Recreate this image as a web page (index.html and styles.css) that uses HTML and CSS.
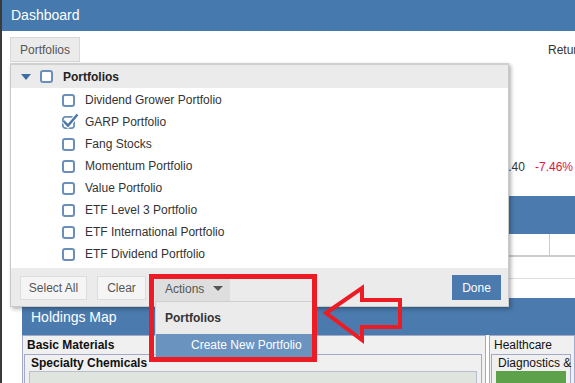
FILE: index.html
```html
<!DOCTYPE html>
<html>
<head>
<meta charset="utf-8">
<title>Dashboard</title>
<link rel="stylesheet" href="styles.css">
</head>
<body>
<div class="app">
  <header class="topbar">Dashboard</header>
  <div class="toolbar">
    <button class="tab">Portfolios</button>
    <span class="returns">Returns</span>
  </div>
  <main class="content">
    <div class="stats"><span class="val">$12,480.40</span><span class="chg">-7.46%</span></div>
    <section class="perf">
      <div class="perf-head"></div>
      <div class="perf-row thead"><span class="cell"></span></div>
      <div class="perf-row"></div>
    </section>
    <section class="hmap">
      <div class="hmap-head">Holdings Map</div>
      <div class="hmap-body">
        <div class="sector wide">
          <div class="sector-title bold">Basic Materials</div>
          <div class="industry">
            <div class="industry-title bold">Specialty Chemicals</div>
            <div class="tiles"></div>
          </div>
        </div>
        <div class="sector">
          <div class="sector-title">Healthcare</div>
          <div class="industry">
            <div class="industry-title">Diagnostics &amp; Research</div>
            <div class="tiles"><div class="tile-green"></div></div>
          </div>
        </div>
      </div>
    </section>
  </main>

  <div class="dropdown">
    <div class="dd-head">
      <span class="caret-down"></span>
      <span class="cb"></span>
      <span class="dd-head-label">Portfolios</span>
    </div>
    <ul class="dd-list">
      <li class="dd-item"><span class="cb"></span>Dividend Grower Portfolio</li>
      <li class="dd-item"><svg class="cb-checked" viewBox="0 0 13 13" width="13" height="13"><rect x="0.9" y="0.9" width="11.2" height="11.2" rx="2.5" fill="#fff" stroke="#6a8fba" stroke-width="1.8"/><path d="M1.5 5 L6 9.6 L15.5 -1.5" fill="none" stroke="#fff" stroke-width="4.5"/><path d="M1.5 5 L6 9.6 L15.5 -1.5" fill="none" stroke="#4a76a8" stroke-width="2.4"/></svg>GARP Portfolio</li>
      <li class="dd-item"><span class="cb"></span>Fang Stocks</li>
      <li class="dd-item"><span class="cb"></span>Momentum Portfolio</li>
      <li class="dd-item"><span class="cb"></span>Value Portfolio</li>
      <li class="dd-item"><span class="cb"></span>ETF Level 3 Portfolio</li>
      <li class="dd-item"><span class="cb"></span>ETF International Portfolio</li>
      <li class="dd-item"><span class="cb"></span>ETF Dividend Portfolio</li>
    </ul>
    <div class="dd-foot">
      <button class="btn btn-select">Select All</button>
      <button class="btn btn-clear">Clear</button>
      <div class="actions">
        <button class="btn btn-actions">Actions<span class="caret-sm"></span></button>
        <div class="actions-menu">
          <div class="menu-title">Portfolios</div>
          <div class="menu-item">Create New Portfolio</div>
        </div>
      </div>
      <button class="btn btn-done">Done</button>
    </div>
  </div>

  <div class="annot-box"></div>
  <svg class="annot-arrow" width="82" height="60" viewBox="0 0 82 60">
    <polygon points="4,29 40,4 40,16 78,16 78,43 40,43 40,56" fill="none" stroke="#ed1c24" stroke-width="4" stroke-linejoin="miter"/>
  </svg>
</div>
</body>
</html>
```

FILE: styles.css
```css
* { box-sizing: border-box; margin: 0; padding: 0; }
html, body { width: 575px; height: 383px; overflow: hidden; }
body {
  background: #3a3a3a;
  font-family: "Liberation Sans", Arial, sans-serif;
  font-size: 12px;
  color: #333;
}
.app {
  position: relative;
  margin-left: 2px;
  height: 383px;
  background: #fff;
  overflow: hidden;
}
.topbar {
  height: 31px;
  background: #4679ad;
  color: #fff;
  font-size: 14px;
  line-height: 31px;
  padding-left: 9px;
}
.toolbar {
  height: 32px;
  display: flex;
  align-items: flex-start;
  padding: 6px 0 0 8px;
}
.tab {
  height: 25px;
  width: 70px;
  flex: none;
  background: #ebebeb;
  border: 1px solid #d8d8d8;
  color: #555;
  font-family: inherit;
  font-size: 12px;
}
.returns {
  margin-left: 468px;
  margin-top: 6px;
  line-height: 14px;
  white-space: nowrap;
  color: #333;
}
.content { padding-left: 20px; }
.stats {
  display: flex;
  justify-content: flex-end;
  gap: 10px;
  padding-right: 2px;
  margin-top: 96px;
  height: 16px;
  line-height: 16px;
  white-space: nowrap;
}
.val { color: #333; }
.chg { color: #e0143c; }
.perf { margin-top: 21px; }
.perf-head { height: 38px; background: #4a7aae; }
.perf-row {
  height: 22px;
  border-bottom: 1px solid #ddd;
  display: flex;
  justify-content: flex-end;
}
.perf-row.thead { height: 23px; border-bottom: 2px solid #ccc; }
.thead .cell { width: 26px; border-left: 1px solid #ccc; }

.hmap { margin-top: 19px; }
.hmap-head {
  height: 37px;
  line-height: 38px;
  background: #4a7aae;
  color: #fff;
  font-size: 14px;
  padding-left: 9px;
}
.hmap-body { display: flex; gap: 3px; }
.sector {
  flex: 1;
  min-width: 0;
  height: 60px;
  background: #f0f0f0;
  border: 1px solid #a3aac8;
  border-bottom: none;
  overflow: hidden;
}
.sector.wide { flex: 0 0 464px; }
.sector-title {
  height: 18px;
  line-height: 18px;
  padding-left: 4px;
  color: #111;
  white-space: nowrap;
}
.bold { font-weight: bold; }
.industry {
  margin: 0 3px 0 1px;
  border: 1px solid #a3aac8;
  border-bottom: none;
  height: 40px;
}
.industry-title {
  height: 16px;
  line-height: 16px;
  padding-left: 6px;
  color: #111;
  white-space: nowrap;
}
.tiles {
  margin: 0 4px;
  height: 30px;
  background: #dfe4df;
  border: 1px solid #b8bfcb;
}
.sector:not(.wide) .tiles { background: transparent; border: none; }
.tile-green { height: 30px; background: #5da14b; }

.dropdown {
  position: absolute;
  left: 8px;
  top: 63px;
  width: 499px;
  height: 244px;
  background: #fff;
  border: 1px solid #c9c9c9;
  border-top: 2px solid #d0d0d0;
  box-shadow: 2px 2px 4px rgba(0, 0, 0, 0.3);
}
.dd-head {
  height: 23px;
  background: #ebebeb;
  display: flex;
  align-items: center;
  padding-left: 10px;
}
.caret-down {
  width: 0;
  height: 0;
  border-left: 5px solid transparent;
  border-right: 5px solid transparent;
  border-top: 6px solid #3b6ea6;
  margin-right: 9px;
}
.cb {
  width: 13px;
  height: 13px;
  flex: none;
  border: 2px solid #6a8fba;
  border-radius: 3px;
  background: #fff;
  margin-right: 10px;
}
.cb-checked { flex: none; overflow: visible; margin-right: 10px; }
.dd-head-label { font-weight: bold; color: #222; }
.dd-list { height: 180px; padding-top: 1px; list-style: none; }
.dd-item {
  height: 22px;
  display: flex;
  align-items: center;
  padding-left: 51px;
  color: #333;
}
.dd-foot {
  height: 38px;
  background: #ebebeb;
  display: flex;
  align-items: flex-start;
  padding: 8px 7px 0 9px;
}
.btn {
  height: 24px;
  border: 1px solid #dcdcdc;
  background: #f5f5f5;
  color: #555;
  font-family: inherit;
  font-size: 12px;
  padding: 0;
  flex: none;
}
.btn-select { width: 67px; }
.btn-clear { width: 49px; margin-left: 10px; }
.actions { position: relative; margin-left: 9px; }
.btn-actions {
  width: 75px;
  height: 25px;
  background: #dedede;
  border-color: #dedede;
  display: flex;
  align-items: center;
  padding-left: 9px;
}
.caret-sm {
  width: 0;
  height: 0;
  border-left: 5px solid transparent;
  border-right: 5px solid transparent;
  border-top: 5px solid #555;
  margin-left: 9px;
}
.actions-menu {
  position: absolute;
  left: 0;
  top: 25px;
  width: 158px;
  background: #ebebeb;
  border: 1px solid #cfcfcf;
}
.menu-title {
  height: 32px;
  line-height: 32px;
  padding-left: 9px;
  font-weight: bold;
  color: #333;
}
.menu-item {
  height: 23px;
  line-height: 23px;
  padding-left: 35px;
  background: #6b93c0;
  color: #fff;
  white-space: nowrap;
}
.btn-done {
  width: 49px;
  height: 25px;
  margin-top: -1px;
  margin-left: auto;
  background: #4a7aae;
  border-color: #4a7aae;
  color: #fff;
}
.annot-box {
  position: absolute;
  left: 147px;
  top: 274px;
  width: 168px;
  height: 88px;
  border: 5px solid #ed1c24;
}
.annot-arrow {
  position: absolute;
  left: 320px;
  top: 284px;
  overflow: visible;
}
```
